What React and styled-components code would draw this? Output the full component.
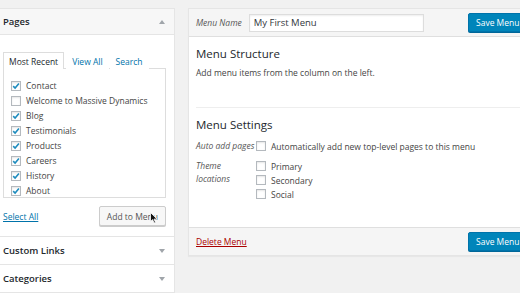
import React from "react";
import styled, { createGlobalStyle } from "styled-components";

const Global = createGlobalStyle`
  html, body { margin: 0; padding: 0; background: #f1f1f1; }
  body { font-family: "Open Sans", "Liberation Sans", sans-serif; color: #444; overflow: hidden; }
  * { box-sizing: border-box; }
`;

const Page = styled.div`
  width: 520px;
  height: 293px;
  overflow: hidden;
  display: flex;
  align-items: flex-start;
  gap: 13px;
  padding-top: 8px;
`;

const LeftCol = styled.div`
  margin-left: -6px;
  width: 181px;
  flex: none;
  display: flex;
  flex-direction: column;
  border: 1px solid #e5e5e5;
  background: #fff;
`;

const Section = styled.div`
  border-top: ${(p) => (p.$first ? "none" : "1px solid #e5e5e5")};
`;

const SectionTitle = styled.div`
  height: ${(p) => (p.$open ? "26px" : "27px")};
  display: flex;
  align-items: center;
  justify-content: space-between;
  padding: 0 8px 0 8px;
  font-size: 9.5px;
  font-weight: 600;
  color: #23282d;
  background: ${(p) => (p.$open ? "#f7f7f7" : "#fff")};
  border-bottom: ${(p) => (p.$open ? "1px solid #e5e5e5" : "none")};
`;

const Arrow = styled.span`
  width: 0;
  height: 0;
  margin-right: 1px;
  border-left: 3px solid transparent;
  border-right: 3px solid transparent;
  ${(p) =>
    p.$up
      ? "border-bottom: 4px solid #a0a5aa;"
      : "border-top: 4px solid #a0a5aa;"}
`;

const SectionBody = styled.div`
  padding: 16px 8px 10px 8px;
  background: #fff;
`;

const Tabs = styled.div`
  display: flex;
  align-items: flex-end;
  height: 17px;
  font-size: 8.5px;
`;

const Tab = styled.div`
  height: 17px;
  padding: 0 5px;
  display: flex;
  align-items: center;
  color: ${(p) => (p.$active ? "#23282d" : "#0073aa")};
  background: #fff;
  border: 1px solid ${(p) => (p.$active ? "#dddddd" : "transparent")};
  border-bottom: none;
  margin-bottom: -1px;
  position: relative;
  z-index: 1;
  margin-right: ${(p) => (p.$active ? "2px" : "1px")};
`;

const TabPanel = styled.div`
  border: 1px solid #dddddd;
  padding: 9px 0 0 7px;
  height: 130px;
  overflow: hidden;
`;

const CheckList = styled.ul`
  list-style: none;
  margin: 0;
  padding: 0;
`;

const CheckItem = styled.li`
  display: flex;
  align-items: center;
  gap: 5px;
  height: 15px;
  font-size: 8.5px;
  color: #444;
`;

const BoxWrap = styled.span`
  width: 10px;
  height: 10px;
  flex: none;
  border: 1px solid #b4b9be;
  background: #fff;
  box-shadow: inset 0 1px 2px rgba(0, 0, 0, 0.1);
  display: flex;
  align-items: center;
  justify-content: center;
`;

const Box = ({ checked }) => (
  <BoxWrap>
    {checked && (
      <svg width="8" height="8" viewBox="0 0 8 8">
        <path d="M1.2 4.2 L3.1 6 L6.9 1.6" fill="none" stroke="#1e8cbe" strokeWidth="1.6" />
      </svg>
    )}
  </BoxWrap>
);

const ActionRow = styled.div`
  display: flex;
  align-items: center;
  justify-content: space-between;
  margin-top: 8px;
`;

const Link = styled.a`
  font-size: 8.5px;
  color: #0073aa;
  text-decoration: underline;
`;

const GrayButton = styled.div`
  position: relative;
  height: 20px;
  padding: 0 7px;
  display: flex;
  align-items: center;
  font-size: 8.5px;
  color: #555;
  background: #f7f7f7;
  border: 1px solid #cccccc;
  border-radius: 2px;
  box-shadow: 0 1px 0 #cccccc;
`;

const Cursor = styled.svg`
  position: absolute;
  left: 50px;
  top: 5px;
`;

const RightPanel = styled.div`
  width: 348px;
  flex: none;
  border: 1px solid #e5e5e5;
  background: #fff;
  box-shadow: 0 1px 1px rgba(0, 0, 0, 0.04);
  display: flex;
  flex-direction: column;
`;

const Bar = styled.div`
  height: 28px;
  display: flex;
  align-items: center;
  padding: 0 7px;
  background: #f5f5f5;
  border-${(p) => (p.$bottom ? "top" : "bottom")}: 1px solid #dfdfdf;
`;

const ItalicLabel = styled.span`
  font-size: 8.5px;
  font-style: italic;
  color: #555;
  line-height: 13px;
  white-space: nowrap;
`;

const NameInput = styled.div`
  margin-left: 7px;
  width: 175px;
  height: 18px;
  border: 1px solid #dddddd;
  background: #fff;
  box-shadow: inset 0 1px 2px rgba(0, 0, 0, 0.07);
  display: flex;
  align-items: center;
  padding: 0 4px;
  font-size: 9.5px;
  color: #32373c;
`;

const PrimaryButton = styled.div`
  margin-left: auto;
  width: 60px;
  height: 19px;
  padding-left: 7px;
  display: flex;
  align-items: center;
  font-size: 8.5px;
  color: #fff;
  background: #0085ba;
  border: 1px solid #0073aa;
  border-radius: 2px;
  box-shadow: 0 1px 0 #006799;
  white-space: nowrap;
`;

const Body = styled.div`
  padding: 0 7px;
  height: 190px;
`;

const Block = styled.div`
  padding: ${(p) => p.$pad};
  border-bottom: ${(p) => (p.$line ? "1px solid #eeeeee" : "none")};
`;

const Heading = styled.h3`
  margin: 0;
  font-size: 11.5px;
  font-weight: 400;
  color: #23282d;
  line-height: 16px;
`;

const Text = styled.p`
  margin: ${(p) => p.$m || "0"};
  font-size: 8.5px;
  line-height: 13px;
  color: #444;
`;

const SettingRow = styled.div`
  display: grid;
  grid-template-columns: 60px 1fr;
  margin-top: ${(p) => p.$mt};
`;

const OptionList = styled.div`
  display: flex;
  flex-direction: column;
`;

const Option = styled.div`
  display: flex;
  align-items: center;
  gap: 5px;
  height: 14px;
  font-size: 8.5px;
  color: #444;
`;

const DeleteLink = styled.a`
  font-size: 8.5px;
  color: #a00;
  text-decoration: underline;
`;

const pages = [
  ["Contact", true],
  ["Welcome to Massive Dynamics", false],
  ["Blog", true],
  ["Testimonials", true],
  ["Products", true],
  ["Careers", true],
  ["History", true],
  ["About", true],
];

export default function App() {
  return (
    <>
      <Global />
      <Page>
        <LeftCol>
          <Section $first>
            <SectionTitle $open>
              Pages <Arrow $up />
            </SectionTitle>
            <SectionBody>
              <Tabs>
                <Tab $active>Most Recent</Tab>
                <Tab>View All</Tab>
                <Tab>Search</Tab>
              </Tabs>
              <TabPanel>
                <CheckList>
                  {pages.map(([name, c]) => (
                    <CheckItem key={name}>
                      <Box checked={c} />
                      {name}
                    </CheckItem>
                  ))}
                </CheckList>
              </TabPanel>
              <ActionRow>
                <Link>Select All</Link>
                <GrayButton>
                  Add to Menu
                  <Cursor width="8" height="12" viewBox="0 0 8 12">
                    <path d="M0.5 0.5 L0.5 9.5 L2.6 7.6 L4.1 11 L5.5 10.4 L4 7.1 L7 7.1 Z" fill="#111" stroke="#fff" strokeWidth="0.8" />
                  </Cursor>
                </GrayButton>
              </ActionRow>
            </SectionBody>
          </Section>
          <Section>
            <SectionTitle>
              Custom Links <Arrow />
            </SectionTitle>
          </Section>
          <Section>
            <SectionTitle>
              Categories <Arrow />
            </SectionTitle>
          </Section>
        </LeftCol>

        <RightPanel>
          <Bar>
            <ItalicLabel>Menu Name</ItalicLabel>
            <NameInput>My First Menu</NameInput>
            <PrimaryButton>Save Menu</PrimaryButton>
          </Bar>
          <Body>
            <Block $pad="9px 0 28px 0" $line>
              <Heading>Menu Structure</Heading>
              <Text $m="4px 0 0 0">Add menu items from the column on the left.</Text>
            </Block>
            <Block $pad="9px 0 0 0">
              <Heading>Menu Settings</Heading>
              <SettingRow $mt="6px">
                <ItalicLabel>Auto add pages</ItalicLabel>
                <Option>
                  <Box />
                  Automatically add new top-level pages to this menu
                </Option>
              </SettingRow>
              <SettingRow $mt="6px">
                <ItalicLabel>
                  Theme
                  <br />
                  locations
                </ItalicLabel>
                <OptionList>
                  <Option>
                    <Box />
                    Primary
                  </Option>
                  <Option>
                    <Box />
                    Secondary
                  </Option>
                  <Option>
                    <Box />
                    Social
                  </Option>
                </OptionList>
              </SettingRow>
            </Block>
          </Body>
          <Bar $bottom>
            <DeleteLink>Delete Menu</DeleteLink>
            <PrimaryButton>Save Menu</PrimaryButton>
          </Bar>
        </RightPanel>
      </Page>
    </>
  );
}
